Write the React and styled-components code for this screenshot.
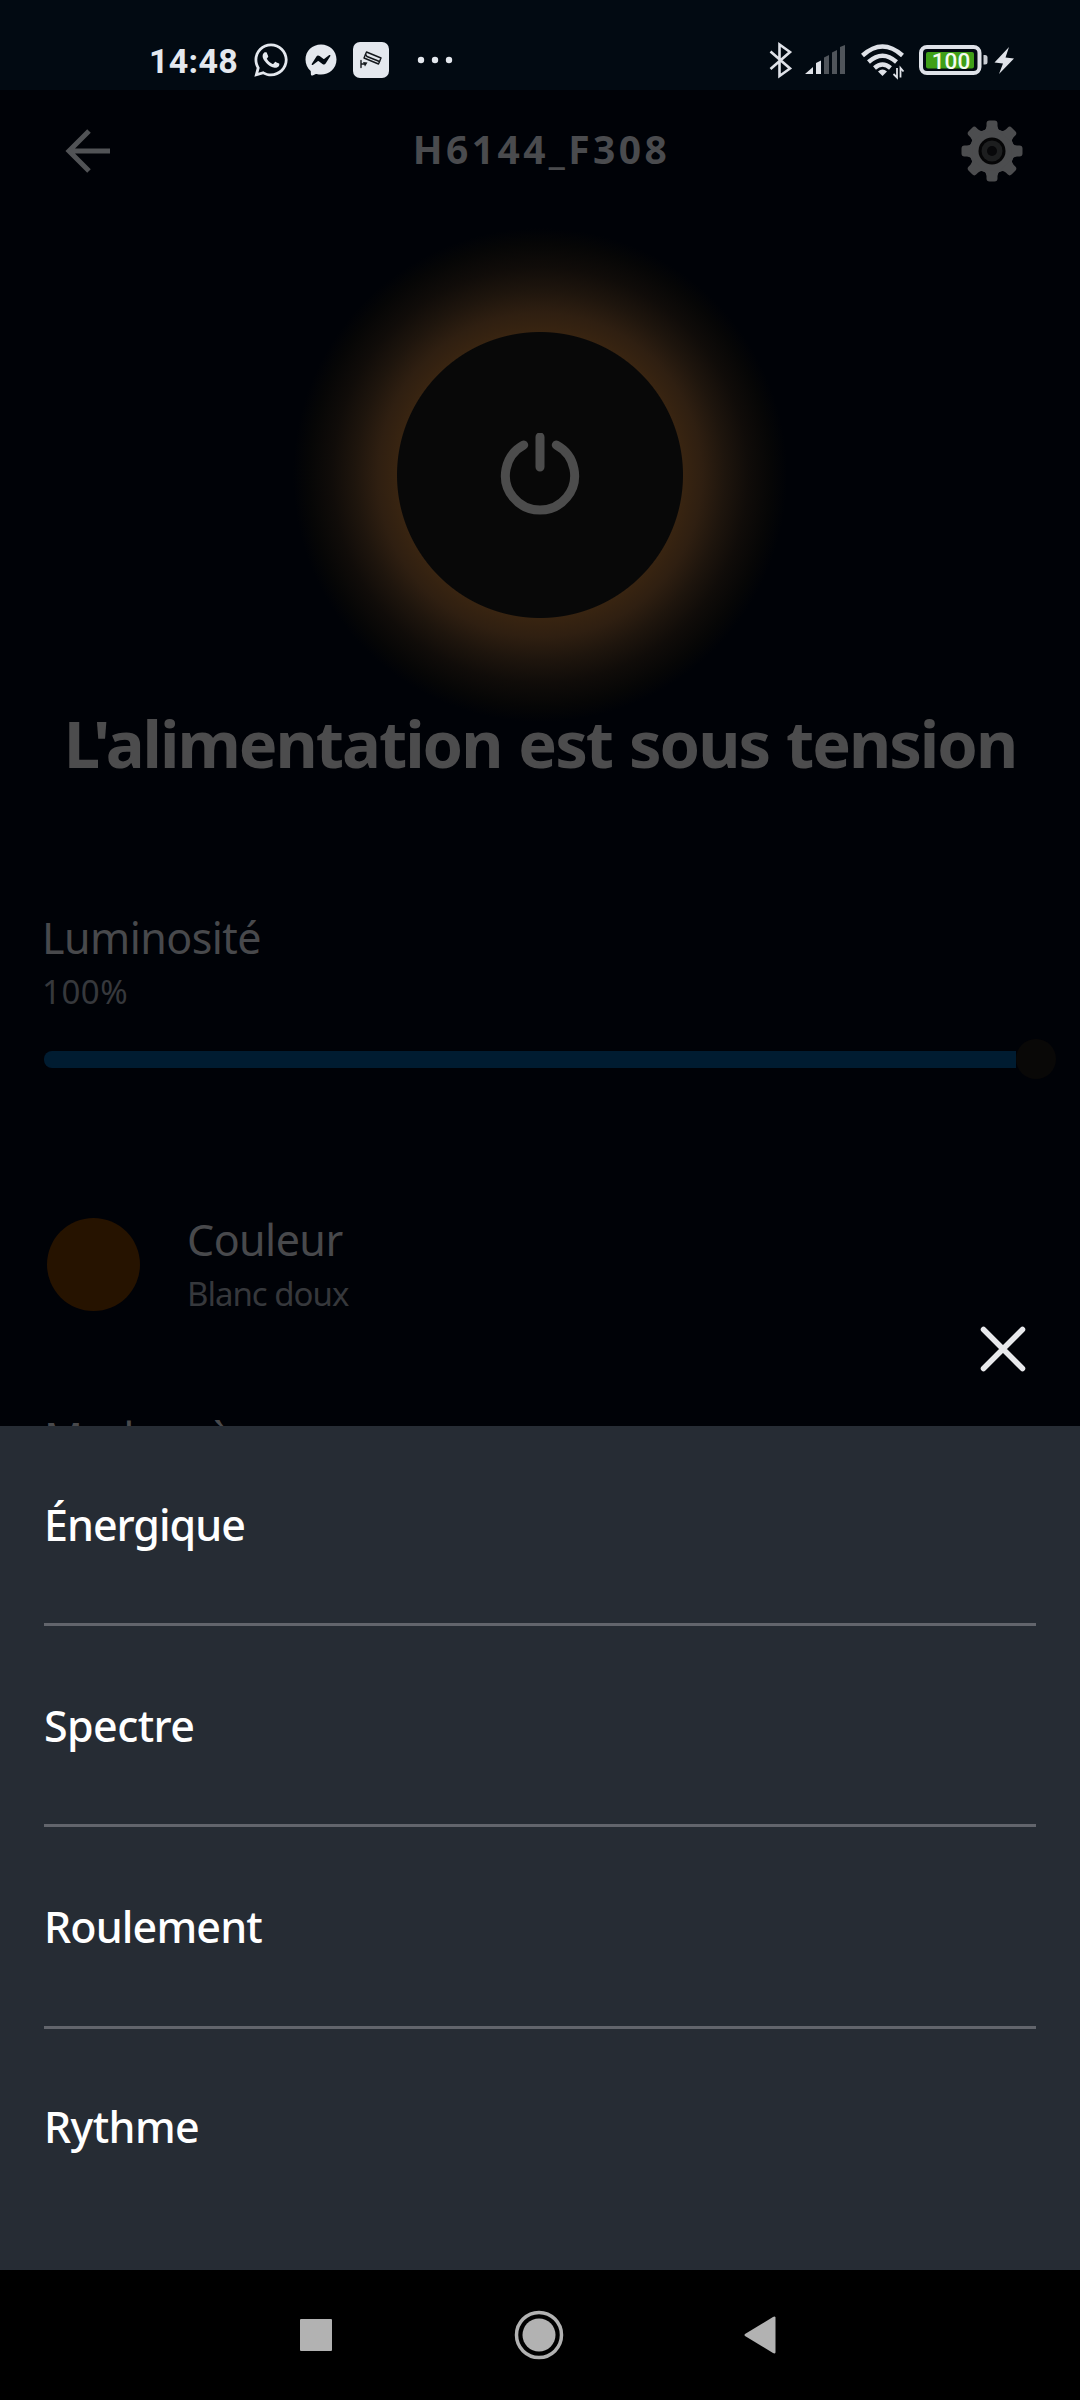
import React from 'react';
import styled, { createGlobalStyle } from 'styled-components';
import { FaWhatsapp, FaFacebookMessenger } from 'react-icons/fa';

const GlobalStyle = createGlobalStyle`
  body {
    margin: 0;
    background: #000;
  }

  * {
    box-sizing: border-box;
  }
`;

const Screen = styled.div`
  display: flex;
  flex-direction: column;
  width: 1080px;
  height: 2400px;
  overflow: hidden;
  background: #000207;
  font-family: 'Noto Sans', 'Open Sans', sans-serif;

  svg {
    display: block;
    flex: none;
  }
`;

const StatusBar = styled.header`
  display: flex;
  align-items: center;
  justify-content: space-between;
  flex: none;
  height: 90px;
  padding: 30px 65px 0 149px;
  background: #020a12;
  color: #e4e8ee;
`;

const StatusGroup = styled.div`
  display: flex;
  align-items: center;
`;

const Clock = styled.span`
  width: 103px;
  padding-top: 1px;
  font: 700 34px/40px Roboto, sans-serif;
  letter-spacing: 0.3px;
`;

const WhatsappIcon = styled(FaWhatsapp)`
  margin-right: 15px;
`;

const MessengerIcon = styled(FaFacebookMessenger)`
  margin-right: 16px;
`;

const MoreDots = styled.svg`
  margin-left: 28px;
`;

const Page = styled.main`
  position: relative;
  flex: none;
  height: 1336px;
  overflow: hidden;
`;

const TitleBar = styled.div`
  display: flex;
  align-items: center;
  justify-content: space-between;
  height: 122px;
  padding: 0 57px 0 65px;
`;

const DeviceName = styled.h1`
  margin: -4px 0 0 11px;
  color: #4a4b4e;
  font-size: 39px;
  font-weight: 700;
  line-height: 52px;
  letter-spacing: 3.4px;
`;

const PowerButton = styled.div`
  display: flex;
  align-items: center;
  justify-content: center;
  width: 500px;
  height: 500px;
  margin: 13px auto 0;
  border-radius: 50%;
  background: radial-gradient(
    circle closest-side,
    #080808 0 142.5px,
    #382411 143.5px,
    #2f1f11 162px,
    #1e150d 185px,
    #100c09 208px,
    #060606 231px,
    #000207 247px
  );
`;

const PowerState = styled.h2`
  margin: -26px 0 0;
  color: #4c4c4d;
  font-size: 65px;
  font-weight: 700;
  line-height: 88px;
  letter-spacing: -2px;
  word-spacing: 2px;
  text-align: center;
  white-space: nowrap;
`;

const Section = styled.section`
  padding: 122px 24px 0 42px;
`;

const Label = styled.div`
  color: #48494c;
  font-size: 43px;
  line-height: 58px;
  letter-spacing: -0.55px;
`;

const Value = styled.div`
  margin-top: 2px;
  color: #36383c;
  font-size: 33px;
  line-height: 46px;
  letter-spacing: ${(props) => props.$spacing}px;
`;

const Slider = styled.div`
  display: flex;
  align-items: center;
  height: 40px;
  margin: 24px 0 0 2px;
`;

const SliderTrack = styled.div`
  flex: 1;
  height: 17px;
  border-radius: 8px 0 0 8px;
  background: #001c31;
`;

const SliderThumb = styled.div`
  width: 40px;
  height: 40px;
  border-radius: 50%;
  background: #090807;
`;

const ColorRow = styled.section`
  display: flex;
  gap: 47px;
  padding: 132px 0 0 47px;
`;

const Swatch = styled.div`
  width: 93px;
  height: 93px;
  margin-top: 7px;
  border-radius: 50%;
  background: #261300;
`;

const SceneRow = styled.section`
  padding: 92px 0 0 44px;
`;

const CloseButton = styled.button`
  position: absolute;
  right: 49px;
  bottom: 49px;
  padding: 0;
  border: 0;
  background: none;
`;

const Sheet = styled.ul`
  flex: none;
  height: 844px;
  margin: 0;
  padding: 0 44px;
  background: #262c34;
  list-style: none;
`;

const SheetItem = styled.li`
  display: flex;
  align-items: center;
  height: 201.4px;
  padding-top: 1px;
  border-bottom: 3px solid #62656c;
  color: #fff;
  font-size: 43px;
  font-weight: 500;
  line-height: 58px;
  letter-spacing: ${(props) => props.$spacing}px;

  &:first-child {
    height: 200px;
  }

  &:last-child {
    height: 196px;
    border-bottom: none;
  }
`;

const NavBar = styled.nav`
  display: flex;
  align-items: center;
  justify-content: space-between;
  flex: 1;
  padding: 0 304px 0 300px;
  background: #000;
`;

const HomeIcon = styled.svg`
  margin-left: 2px;
`;

const scenes = [
  { name: 'Énergique', spacing: -1 },
  { name: 'Spectre', spacing: -0.6 },
  { name: 'Roulement', spacing: -0.85 },
  { name: 'Rythme', spacing: -0.6 },
];

const gearTeeth = [0, 45, 90, 135, 180, 225, 270, 315];

function CameraIcon() {
  return (
    <svg width="36" height="36" viewBox="0 0 36 36">
      <rect width="36" height="36" rx="7" fill="#e4e8ee" />
      <g
        fill="none"
        stroke="#14181c"
        strokeWidth="1.4"
        strokeLinejoin="round"
        strokeLinecap="round"
      >
        <path d="M13.5 10 28 16 25.5 22 11 16Z" />
        <path d="M12.5 12.5 14 14.5 26.5 19.5M8 18.5V25.5M8 22H11" />
      </g>
      <path d="M10 20 14.5 20.5 12 24.5Z" fill="#14181c" />
    </svg>
  );
}

function StatusIcons() {
  return (
    <svg width="250" height="40" viewBox="765 40 250 40">
      <path
        d="M770.5 51.5 790 68.5 779.5 76V44.5L790 52 770.5 69"
        fill="none"
        stroke="#dfe2e8"
        strokeWidth="2.6"
      />
      <path d="M805 74 813 67V74ZM816 74V63L821 60.5V74Z" fill="#dfe2e8" />
      <path
        d="M824 74V57.5L829 55V74ZM832 74V52.5L837 50V74ZM840 74V47L845 45V74Z"
        fill="#50555b"
      />
      <g fill="none" stroke="#dfe2e8" strokeWidth="4.4">
        <path d="M862.5 55.5Q882.5 37.5 902.5 55.5" />
        <path d="M868.5 62Q882.5 49.5 896.5 62" />
        <path d="M874.5 68Q882.5 61 890.5 68" />
      </g>
      <path d="M878 71.5Q882.5 67.5 887 71.5L882.5 76Z" fill="#dfe2e8" />
      <path
        d="M897 68V77.5L893.5 74M900.5 77.5V68L903.5 71.5"
        fill="none"
        stroke="#dfe2e8"
        strokeWidth="1.8"
      />
      <rect
        x="921"
        y="47"
        width="58.5"
        height="26"
        rx="6"
        fill="none"
        stroke="#dfe2e8"
        strokeWidth="4"
      />
      <rect x="926" y="52" width="48" height="16.5" rx="2" fill="#3f9f17" />
      <path
        d="M983.5 55H985Q987.5 55 987.5 57.5V62Q987.5 64.5 985 64.5H983.5Z"
        fill="#c9ccd2"
      />
      <text
        x="951"
        y="68.5"
        textAnchor="middle"
        fontFamily="Roboto, sans-serif"
        fontSize="22.5"
        fontWeight="500"
        fill="#f4fbef"
      >
        100
      </text>
      <path
        d="M1009 47 994.5 62.5 1003 63.5 999 74 1014 58.5 1005.5 57.5Z"
        fill="#dfe2e8"
      />
    </svg>
  );
}

function BackIcon() {
  return (
    <svg width="46" height="46" viewBox="0 0 46 46">
      <path
        d="M45 23H4M24 3 4 23 24 43"
        fill="none"
        stroke="#515356"
        strokeWidth="5"
      />
    </svg>
  );
}

function GearIcon() {
  return (
    <svg width="62" height="62" viewBox="-31 -31 62 62">
      <g fill="#4c4d4f">
        <circle r="22.5" />
        {gearTeeth.map((angle) => (
          <path
            key={angle}
            transform={`rotate(${angle})`}
            d="M-8.5-19.5Q-5.5-22-5.5-25V-27.5Q-5.5-30.5-2.5-30.5H2.5Q5.5-30.5 5.5-27.5V-25Q5.5-22 8.5-19.5Z"
          />
        ))}
      </g>
      <circle r="13.5" fill="#050506" />
      <circle r="10.5" fill="#1d1e1f" />
      <circle r="5" fill="#08080a" />
    </svg>
  );
}

function PowerIcon() {
  return (
    <svg width="84" height="84" viewBox="-42 -42 84 84">
      <path
        d="M-16.3-30A34.6 34.6 0 1 0 16.3-30M0-38V-8"
        fill="none"
        stroke="#4c4c4c"
        strokeWidth="9"
        strokeLinecap="round"
      />
    </svg>
  );
}

function App() {
  return (
    <Screen>
      <GlobalStyle />
      <StatusBar>
        <StatusGroup>
          <Clock>14:48</Clock>
          <WhatsappIcon size={38} />
          <MessengerIcon size={32} />
          <CameraIcon />
          <MoreDots width="36" height="8" viewBox="0 0 36 8" fill="currentColor">
            <circle cx="4" cy="4" r="3.2" />
            <circle cx="18" cy="4" r="3.2" />
            <circle cx="32" cy="4" r="3.2" />
          </MoreDots>
        </StatusGroup>
        <StatusIcons />
      </StatusBar>

      <Page>
        <TitleBar>
          <BackIcon />
          <DeviceName>H6144_F308</DeviceName>
          <GearIcon />
        </TitleBar>

        <PowerButton>
          <PowerIcon />
        </PowerButton>
        <PowerState>L'alimentation est sous tension</PowerState>

        <Section>
          <Label>Luminosité</Label>
          <Value $spacing={0.5}>100%</Value>
          <Slider>
            <SliderTrack />
            <SliderThumb />
          </Slider>
        </Section>

        <ColorRow>
          <Swatch />
          <div>
            <Label>Couleur</Label>
            <Value $spacing={-1}>Blanc doux</Value>
          </div>
        </ColorRow>

        <SceneRow>
          <Label>Mode scène</Label>
        </SceneRow>

        <CloseButton aria-label="Fermer">
          <svg width="56" height="56" viewBox="0 0 56 56">
            <path
              d="M8.5 8.5 47.5 47.5M47.5 8.5 8.5 47.5"
              fill="none"
              stroke="#e8e9ec"
              strokeWidth="5.5"
              strokeLinecap="round"
            />
          </svg>
        </CloseButton>
      </Page>

      <Sheet>
        {scenes.map((scene) => (
          <SheetItem key={scene.name} $spacing={scene.spacing}>
            {scene.name}
          </SheetItem>
        ))}
      </Sheet>

      <NavBar>
        <svg width="32" height="32">
          <rect width="32" height="32" rx="1" fill="#b2b2b2" />
        </svg>
        <HomeIcon width="50" height="50" viewBox="-25 -25 50 50">
          <circle r="22.5" fill="none" stroke="#b2b2b2" strokeWidth="3.5" />
          <circle r="16.5" fill="#b2b2b2" />
        </HomeIcon>
        <svg width="32" height="38" viewBox="0 0 32 38">
          <path
            d="M31.5 1.5V36.5Q31 38 29 37L1 20Q0 19 1 18L29 1Q31 0 31.5 1.5Z"
            fill="#b2b2b2"
          />
        </svg>
      </NavBar>
    </Screen>
  );
}

export default App;
